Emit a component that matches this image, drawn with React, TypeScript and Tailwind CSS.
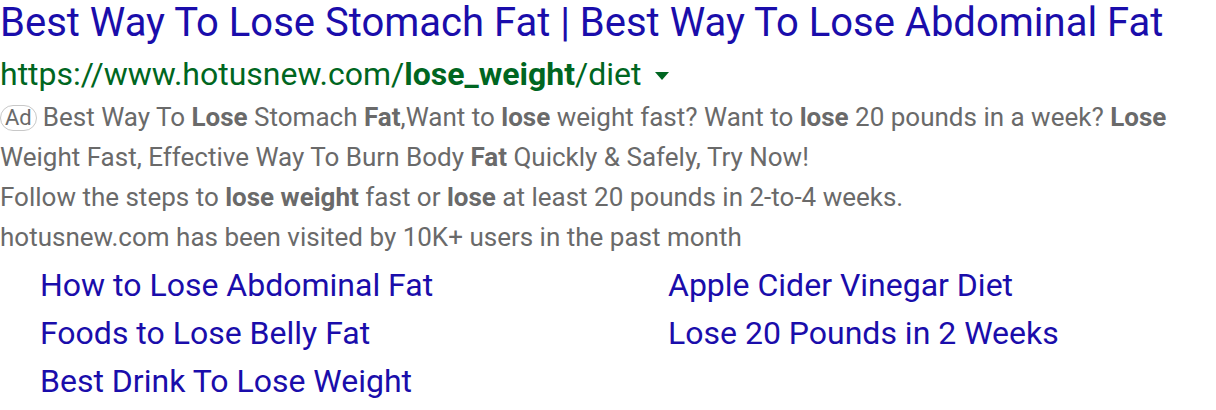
import React from "react";

const sitelinks = [
  ["How to Lose Abdominal Fat", "Apple Cider Vinegar Diet"],
  ["Foods to Lose Belly Fat", "Lose 20 Pounds in 2 Weeks"],
  ["Best Drink To Lose Weight", ""],
];

const App = () => {
  return (
    <div className="w-[1216px] h-[410px] bg-white overflow-hidden font-['Roboto',sans-serif]">
      <div className="text-[40px] leading-[46px] text-[#1a0dab] whitespace-nowrap">
        Best Way To Lose Stomach Fat | Best Way To Lose Abdominal Fat
      </div>
      <div className="flex items-center h-[51px] pt-[4px] text-[32px] text-[#006621] whitespace-nowrap">
        <span>
          https://www.hotusnew.com/<b>lose_weight</b>/diet
        </span>
        <svg width="14" height="8" viewBox="0 0 14 8" className="ml-[13px] mt-1">
          <path d="M0 0h14L7 8z" fill="#006621" />
        </svg>
      </div>
      <div className="text-[26px] leading-[40px] text-[#6a6a6a]">
        <div className="whitespace-nowrap">
          <span className="inline-block border border-[#c8c8c8] rounded-[13px] px-[4px] leading-[24px] text-[22px] mr-[6px] align-middle relative -top-[1px]">
            Ad
          </span>
          Best Way To <b>Lose</b> Stomach <b>Fat</b>,Want to <b>lose</b> weight fast? Want to <b>lose</b> 20 pounds in a week? <b>Lose</b>
        </div>
        <div className="whitespace-nowrap">
          Weight Fast, Effective Way To Burn Body <b>Fat</b> Quickly &amp; Safely, Try Now!
        </div>
        <div className="whitespace-nowrap">
          Follow the steps to <b>lose weight</b> fast or <b>lose</b> at least 20 pounds in 2-to-4 weeks.
        </div>
        <div className="whitespace-nowrap">hotusnew.com has been visited by 10K+ users in the past month</div>
      </div>
      <div className="pl-[40px] mt-[4px] grid grid-cols-[628px_1fr] text-[32px] leading-[48px] text-[#1a0dab]">
        {sitelinks.map(([a, b], i) => (
          <React.Fragment key={i}>
            <div className="whitespace-nowrap">{a}</div>
            <div className="whitespace-nowrap">{b}</div>
          </React.Fragment>
        ))}
      </div>
    </div>
  );
};

export default App;
